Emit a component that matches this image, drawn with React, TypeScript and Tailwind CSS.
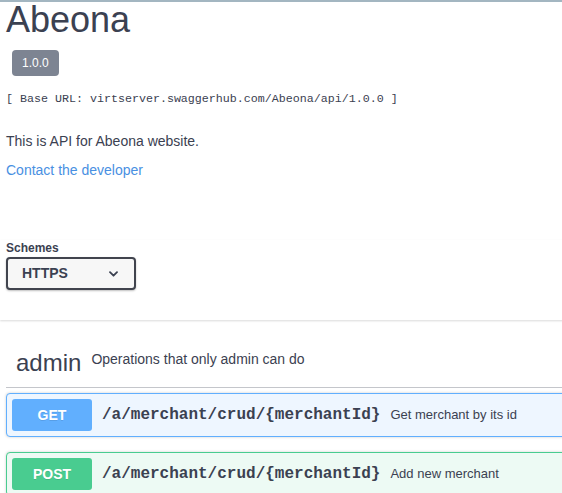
import React from "react";

const ink = "text-[#3b4151]";

function OpBlock({ method, path, summary, tone }: { method: string; path: string; summary: string; tone: "get" | "post" }) {
  const block =
    tone === "get"
      ? "border-[#61affe] bg-[#eef6ff]"
      : "border-[#49cc90] bg-[#edfaf4]";
  const badge = tone === "get" ? "bg-[#61affe]" : "bg-[#49cc90]";
  return (
    <div className={`mb-[15px] rounded-[4px] border shadow-[0_0_3px_rgba(0,0,0,0.19)] ${block}`}>
      <div className="flex items-center p-[5px]">
        <span
          className={`flex h-[32px] w-[80px] items-center justify-center rounded-[3px] text-[14px] font-bold text-white [text-shadow:0_1px_0_rgba(0,0,0,0.1)] ${badge}`}
        >
          {method}
        </span>
        <span className={`px-[10px] font-['Liberation_Mono',monospace] text-[16px] font-bold ${ink}`}>{path}</span>
        <span className={`text-[13px] ${ink}`}>{summary}</span>
      </div>
    </div>
  );
}

export default function App() {
  return (
    <div className="h-[493px] w-[562px] overflow-hidden bg-white font-['Liberation_Sans',Arial,sans-serif]">
      <div className="w-[640px] border-t-2 border-[#a3b6c1]">
        {/* Info */}
        <div className="px-[6px]">
          <h1 className={`text-[36px] leading-[36px] ${ink}`}>Abeona</h1>
          <div className="mt-[12px] ml-[6px] inline-flex h-[26px] items-center rounded-[4px] bg-[#7d8492] px-[10px] text-[12px] text-white">
            1.0.0
          </div>
          <p className={`mt-[16px] font-['Liberation_Mono',monospace] text-[11.67px] leading-[14px] ${ink}`}>
            {"[ Base URL: virtserver.swaggerhub.com/Abeona/api/1.0.0 ]"}
          </p>
          <p className={`mt-[25px] text-[14px] leading-[20px] ${ink}`}>This is API for Abeona website.</p>
          <a className="mt-[9px] block text-[14px] leading-[20px] text-[#4990e2]">Contact the developer</a>
        </div>

        {/* Schemes */}
        <div className="px-[6px] pb-[30px] shadow-[0_1px_2px_0_rgba(0,0,0,0.15)]">
          <div className={`mt-[60px] text-[12px] font-bold leading-[16px] ${ink}`}>Schemes</div>
          <div className="mt-[1px] flex h-[33px] w-[130px] items-center justify-between rounded-[4px] border-2 border-[#41444e] bg-[#f7f7f7] pr-[16px] pl-[14px] shadow-[0_1px_2px_0_rgba(0,0,0,0.25)]">
            <span className={`text-[14px] font-bold ${ink}`}>HTTPS</span>
            <svg width="9" height="6" viewBox="0 0 9 6" fill="none">
              <path d="M1 1.2l3.5 3.5 3.5-3.5" stroke="#3b4151" strokeWidth="1.8" strokeLinecap="round" strokeLinejoin="round" />
            </svg>
          </div>
        </div>

        {/* Tag */}
        <div className="mt-[19px] px-[6px]">
          <div className="mb-[5px] flex items-start border-b border-[#c4c6cb] pt-[10px] pr-[20px] pb-[10px] pl-[10px]">
            <h4 className={`text-[24px] leading-[28px] ${ink}`}>admin</h4>
            <small className={`px-[10px] text-[14px] leading-[20px] ${ink}`}>Operations that only admin can do</small>
          </div>
          <OpBlock method="GET" path="/a/merchant/crud/{merchantId}" summary="Get merchant by its id" tone="get" />
          <OpBlock method="POST" path="/a/merchant/crud/{merchantId}" summary="Add new merchant" tone="post" />
        </div>
      </div>
    </div>
  );
}
